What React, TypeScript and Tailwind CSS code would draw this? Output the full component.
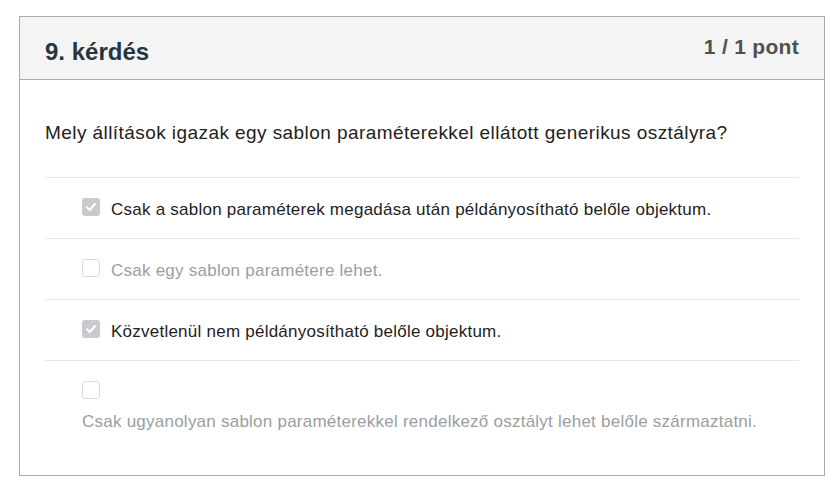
import React from 'react';

interface Option {
  text: string;
  checked: boolean;
  wrap?: boolean;
}

const options: Option[] = [
  { text: 'Csak a sablon paraméterek megadása után példányosítható belőle objektum.', checked: true },
  { text: 'Csak egy sablon paramétere lehet.', checked: false },
  { text: 'Közvetlenül nem példányosítható belőle objektum.', checked: true },
  { text: 'Csak ugyanolyan sablon paraméterekkel rendelkező osztályt lehet belőle származtatni.', checked: false, wrap: true },
];

const Box = ({ checked }: { checked: boolean }) =>
  checked ? (
    <div className="w-[18px] h-[18px] shrink-0 rounded-[3px] bg-[#c9cacd] flex items-center justify-center">
      <svg width="12" height="12" viewBox="0 0 12 12" fill="none">
        <path d="M2 6.3 L4.8 9 L10 3" stroke="#ffffff" strokeWidth="2" strokeLinecap="round" strokeLinejoin="round" />
      </svg>
    </div>
  ) : (
    <div className="w-[18px] h-[18px] shrink-0 rounded-[3px] border border-[#dcdcdc] bg-white" />
  );

export default function App() {
  return (
    <div className="min-h-screen bg-white pt-4 pl-[19px] font-['Liberation_Sans',Arial,sans-serif]">
      <div className="w-[806px] border border-[#ababab]">
        {/* header */}
        <div className="flex justify-between items-start bg-[#f4f4f4] border-b border-[#ababab] pl-[25px] pr-[25px] pt-[21px] pb-[13px]">
          <h2 className="text-[24px] leading-[28px] font-bold text-[#263442]">9. kérdés</h2>
          <span className="-mt-1 text-[21px] leading-[25px] font-bold tracking-[0.3px] text-[#505050]">1 / 1 pont</span>
        </div>

        {/* body */}
        <div className="px-[25px] pt-[42px]">
          <p className="-mt-[1px] text-[19px] leading-[23px] tracking-[0.43px] text-[#222222] mb-[33px] whitespace-nowrap">
            Mely állítások igazak egy sablon paraméterekkel ellátott generikus osztályra?
          </p>

          <div>
            {options.map((o, i) =>
              o.wrap ? (
                <div key={i} className="border-t border-[#e6e6e6] pl-[37px] pt-[20px] pb-[41px]">
                  <Box checked={o.checked} />
                  <div className="mt-[11px] text-[17px] leading-[24px] tracking-[0.24px] text-[#9b9ea2] whitespace-nowrap">
                    {o.text}
                  </div>
                </div>
              ) : (
                <div key={i} className="flex items-start border-t border-[#e6e6e6] pl-[37px] pt-[19px] pb-[16px]">
                  <div className="mt-[1px]">
                    <Box checked={o.checked} />
                  </div>
                  <span className={`ml-[11px] text-[17px] leading-[24px] tracking-[0.24px] mt-[1px] whitespace-nowrap ${o.checked ? 'text-[#1e1e1e]' : 'text-[#9b9ea2]'}`}>
                    {o.text}
                  </span>
                </div>
              )
            )}
          </div>
        </div>
      </div>
    </div>
  );
}
